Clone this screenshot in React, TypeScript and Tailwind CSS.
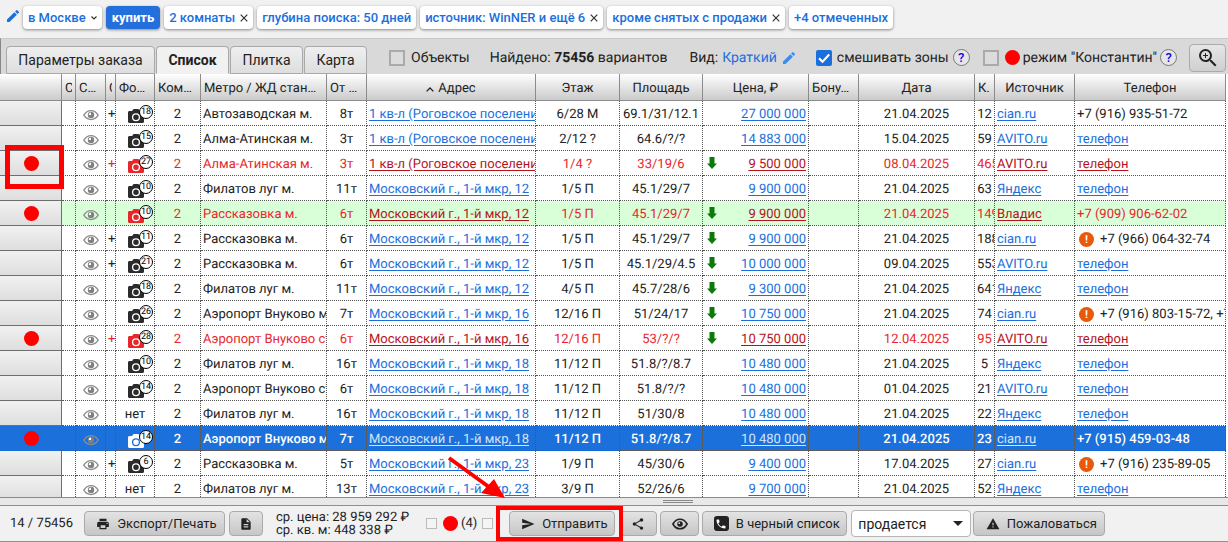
import type { ReactNode } from "react";
import clsx from "clsx";
import {
  MdDescription,
  MdEdit,
  MdPhone,
  MdPrint,
  MdSend,
  MdShare,
  MdWarning,
  MdZoomIn,
} from "react-icons/md";

type Listing = {
  plus?: boolean;
  photos?: number;
  metro: string;
  walk: string;
  address: string;
  floor: string;
  area: string;
  down?: boolean;
  price: string;
  date: string;
  count: string;
  source: string;
  phone?: string;
  warn?: boolean;
  marked?: boolean;
  tone?: "red" | "green" | "selected";
};

const ROGOVO = "1 кв-л (Роговское поселение)";
const MKR = "Московский г., 1-й мкр, ";

const listings: Listing[] = [
  { plus: true, photos: 18, metro: "Автозаводская м.", walk: "8т", address: ROGOVO, floor: "6/28 М", area: "69.1/31/12.1", price: "27 000 000", date: "21.04.2025", count: "12", source: "cian.ru", phone: "+7 (916) 935-51-72" },
  { photos: 15, metro: "Алма-Атинская м.", walk: "3т", address: ROGOVO, floor: "2/12 ?", area: "64.6/?/?", price: "14 883 000", date: "15.04.2025", count: "59", source: "AVITO.ru" },
  { plus: true, photos: 27, metro: "Алма-Атинская м.", walk: "3т", address: ROGOVO, floor: "1/4 ?", area: "33/19/6", down: true, price: "9 500 000", date: "08.04.2025", count: "465", source: "AVITO.ru", marked: true, tone: "red" },
  { photos: 10, metro: "Филатов луг м.", walk: "11т", address: MKR + "12", floor: "1/5 П", area: "45.1/29/7", price: "9 900 000", date: "21.04.2025", count: "63", source: "Яндекс" },
  { photos: 10, metro: "Рассказовка м.", walk: "6т", address: MKR + "12", floor: "1/5 П", area: "45.1/29/7", down: true, price: "9 900 000", date: "21.04.2025", count: "149", source: "Владис", phone: "+7 (909) 906-62-02", marked: true, tone: "green" },
  { plus: true, photos: 11, metro: "Рассказовка м.", walk: "6т", address: MKR + "12", floor: "1/5 П", area: "45.1/29/7", down: true, price: "9 900 000", date: "21.04.2025", count: "188", source: "cian.ru", phone: "+7 (966) 064-32-74", warn: true },
  { plus: true, photos: 21, metro: "Рассказовка м.", walk: "6т", address: MKR + "12", floor: "1/5 П", area: "45.1/29/4.5", down: true, price: "10 000 000", date: "09.04.2025", count: "553", source: "AVITO.ru" },
  { photos: 18, metro: "Филатов луг м.", walk: "11т", address: MKR + "12", floor: "4/5 П", area: "45.7/28/6", down: true, price: "9 300 000", date: "21.04.2025", count: "641", source: "Яндекс" },
  { photos: 26, metro: "Аэропорт Внуково м.", walk: "7т", address: MKR + "16", floor: "12/16 П", area: "51/24/17", down: true, price: "10 750 000", date: "21.04.2025", count: "74", source: "cian.ru", phone: "+7 (916) 803-15-72, +7 (916) 803-15-73", warn: true },
  { plus: true, photos: 28, metro: "Аэропорт Внуково ст.", walk: "6т", address: MKR + "16", floor: "12/16 П", area: "53/?/?", down: true, price: "10 750 000", date: "12.04.2025", count: "95", source: "AVITO.ru", marked: true, tone: "red" },
  { photos: 10, metro: "Филатов луг м.", walk: "16т", address: MKR + "18", floor: "11/12 П", area: "51.8/?/8.7", price: "10 480 000", date: "21.04.2025", count: "5", source: "Яндекс" },
  { photos: 14, metro: "Аэропорт Внуково ст.", walk: "6т", address: MKR + "18", floor: "11/12 П", area: "51.8/?/?", price: "10 480 000", date: "01.04.2025", count: "21", source: "AVITO.ru" },
  { metro: "Филатов луг м.", walk: "16т", address: MKR + "18", floor: "11/12 П", area: "51/30/8", price: "10 480 000", date: "21.04.2025", count: "22", source: "Яндекс" },
  { photos: 14, metro: "Аэропорт Внуково м.", walk: "7т", address: MKR + "18", floor: "11/12 П", area: "51.8/?/8.7", price: "10 480 000", date: "21.04.2025", count: "23", source: "cian.ru", phone: "+7 (915) 459-03-48", marked: true, tone: "selected" },
  { plus: true, photos: 6, metro: "Рассказовка м.", walk: "5т", address: MKR + "23", floor: "1/9 П", area: "45/30/6", price: "9 400 000", date: "17.04.2025", count: "27", source: "cian.ru", phone: "+7 (916) 235-89-05", warn: true },
  { metro: "Филатов луг м.", walk: "13т", address: MKR + "23", floor: "3/9 П", area: "52/26/6", price: "9 700 000", date: "21.04.2025", count: "52", source: "Яндекс" },
];

const columns: { title: string; width: string; left?: boolean; sorted?: boolean }[] = [
  { title: "", width: "w-[62px]" },
  { title: "С", width: "w-[14px]", left: true },
  { title: "С…", width: "w-[30px]", left: true },
  { title: "С", width: "w-[10px]", left: true },
  { title: "Фо…", width: "w-[39px]", left: true },
  { title: "Ком…", width: "w-[46px]", left: true },
  { title: "Метро / ЖД стан…", width: "w-[126px]", left: true },
  { title: "От …", width: "w-[40px]", left: true },
  { title: "Адрес", width: "w-[169px]", sorted: true },
  { title: "Этаж", width: "w-[84px]" },
  { title: "Площадь", width: "w-[83px]" },
  { title: "Цена, ₽", width: "w-[106px]" },
  { title: "Бону…", width: "w-[50px]", left: true },
  { title: "Дата", width: "w-[116px]" },
  { title: "К.", width: "w-[20px]", left: true },
  { title: "Источник", width: "w-[80px]" },
  { title: "Телефон", width: "" },
];

function EyeIcon() {
  return (
    <svg viewBox="0 0 16 12" className="inline-block h-3 w-4" aria-hidden="true">
      <path d="M.8 6.2C2.6 3.2 5 1.6 8 1.6s5.4 1.6 7.2 4.6C13.4 9 11 10.5 8 10.5S2.6 9 .8 6.2Z" fill="none" stroke="#8c8c8c" strokeWidth="1.3" />
      <circle cx="8" cy="5.9" r="3.2" fill="#808080" />
      <path d="M8 5.9V3.6A2.3 2.3 0 0 0 5.7 5.9Z" fill="#fff" />
    </svg>
  );
}

function Camera({ count, color, lens }: { count: number; color: string; lens: string }) {
  return (
    <span className={clsx("relative inline-block h-6 w-6 align-top", color)}>
      <svg viewBox="0 0 16 14" className="absolute top-2 left-0 h-3.5 w-4" aria-hidden="true">
        <path d="M1.5 2h2.7L5 .6C5.2.2 5.5 0 6 0h4c.5 0 .8.2 1 .6l.8 1.4h2.7c.9 0 1.5.6 1.5 1.5v9c0 .9-.6 1.5-1.5 1.5h-13C.6 14 0 13.4 0 12.5v-9C0 2.6.6 2 1.5 2Z" fill="currentColor" />
        <circle cx="8" cy="8.3" r="3.4" fill="none" stroke={lens} strokeWidth="1.3" />
      </svg>
      <span className="absolute top-1 left-[11px] flex size-[14px] items-center justify-center rounded-full border border-black bg-white text-[9px] leading-none font-normal text-black">
        {count}
      </span>
    </span>
  );
}

function RedDot() {
  return <span className="inline-block size-[15px] shrink-0 rounded-full bg-[#fe0000]" />;
}

function Chip({ children, close }: { children: ReactNode; close?: boolean }) {
  return (
    <button type="button" className="flex h-[23px] items-center gap-[5px] rounded bg-white px-[5px] text-[13px] font-medium whitespace-nowrap text-[#1b6fdd] shadow-[0_1px_3px_rgba(0,0,0,0.45)]">
      {children}
      {close && (
        <svg viewBox="0 0 8 8" className="size-2" aria-hidden="true">
          <path d="M.7.7l6.6 6.6M7.3.7L.7 7.3" stroke="#333" strokeWidth="1.2" />
        </svg>
      )}
    </button>
  );
}

function Tab({ children, active, width }: { children: ReactNode; active?: boolean; width: string }) {
  return (
    <button
      type="button"
      role="tab"
      aria-selected={active ?? false}
      className={clsx(
        "h-[28px] shrink-0 rounded-t border border-[#a9a9a9] text-sm whitespace-nowrap",
        width,
        active ? "border-b-[#f1f1f1] bg-[#f1f1f1] font-bold" : "bg-linear-to-b from-[#efefef] to-[#dedede]",
      )}
    >
      {children}
    </button>
  );
}

function Help() {
  return (
    <button type="button" className="flex size-[17px] shrink-0 items-center justify-center rounded-full border border-[#777] bg-[#e6e6e6] text-[13px] leading-none font-medium text-[#1507e8]">
      ?
    </button>
  );
}

function ToolButton({ children, width, label }: { children: ReactNode; width: string; label?: string }) {
  return (
    <button
      type="button"
      aria-label={label}
      className={clsx(
        "flex h-[25px] shrink-0 items-center justify-center gap-[7px] rounded border border-[#aaa] bg-linear-to-b from-[#e3e3e3] to-[#c6c6c6] whitespace-nowrap",
        width,
        !label && "pl-1",
      )}
    >
      {children}
    </button>
  );
}

function Cell({ children, className }: { children?: ReactNode; className?: string }) {
  return (
    <td className={clsx("h-[25px] border-r border-b border-dotted border-[#555] p-0", className)}>
      <div className="h-6 overflow-hidden px-0.5 leading-[28px] whitespace-nowrap">{children}</div>
    </td>
  );
}

function ListingRow({ item }: { item: Listing }) {
  const selected = item.tone === "selected";
  const red = item.tone === "red" || item.tone === "green";
  const link = clsx("underline underline-offset-2", selected ? "font-normal text-[#d5e5fa]" : red ? "text-[#b5121b]" : "text-[#1a6fdc]");

  return (
    <tr
      className={clsx(
        selected && "bg-[#1b70db] font-medium text-white",
        red && "text-[#e8262a]",
        item.tone === "green" && "bg-[#d9ffd9]",
      )}
    >
      <td
        className={clsx(
          "h-[25px] border-r border-b p-0",
          selected ? "border-[#1b70db]" : "border-[#6e6e6e] bg-linear-to-b from-[#f1f1f1] to-[#dedede]",
        )}
      >
        <div className="flex h-6 items-center justify-center pl-0.5">{item.marked && <RedDot />}</div>
      </td>
      <Cell />
      <Cell className="text-center"><EyeIcon /></Cell>
      <Cell className="text-center">{item.plus && "+"}</Cell>
      <Cell className={item.photos ? "text-right" : "text-center"}>
        {item.photos ? (
          <Camera
            count={item.photos}
            color={selected ? "text-white" : red ? "text-[#e8262a]" : "text-[#2b2b2b]"}
            lens={selected ? "#1b70db" : "#fff"}
          />
        ) : (
          "нет"
        )}
      </Cell>
      <Cell className="text-center">2</Cell>
      <Cell>{item.metro}</Cell>
      <Cell className="text-center">{item.walk}</Cell>
      <Cell><a href="#" className={link}>{item.address}</a></Cell>
      <Cell className="text-center">{item.floor}</Cell>
      <Cell className="text-center">{item.area}</Cell>
      <Cell>
        <div className="flex items-start justify-between pl-0.5">
          {item.down ? (
            <svg viewBox="0 0 10 12" className="mt-1.5 h-3 w-2.5" aria-label="Цена снижена">
              <path d="M2.5 0h5v6.5H10L5 12 0 6.5h2.500Z" fill="#0b7a0b" />
            </svg>
          ) : (
            <span />
          )}
          <a href="#" className={link}>{item.price}</a>
        </div>
      </Cell>
      <Cell />
      <Cell className="text-center">{item.date}</Cell>
      <Cell className="text-center">{item.count}</Cell>
      <Cell><a href="#" className={link}>{item.source}</a></Cell>
      <Cell>
        {item.warn && (
          <span className="mr-1.5 ml-0.5 inline-flex size-[15px] items-center justify-center rounded-full bg-[#e8590c] text-[11px] leading-none font-bold text-white">
            !
          </span>
        )}
        {item.phone ?? <a href="#" className={link}>телефон</a>}
      </Cell>
    </tr>
  );
}

export default function App() {
  return (
    <div className="relative flex h-screen flex-col overflow-hidden bg-[#f1f1f1] font-[Roboto,sans-serif] text-[13px] text-[#222] [text-rendering:geometricPrecision]">
      <div className="flex h-[38px] shrink-0 items-start gap-1 pt-1.5 pl-[5px]">
        <MdEdit className="mt-0.5 mr-[-2px] size-4 text-[#1b6fdd]" />
        <Chip>
          в Москве
          <svg viewBox="0 0 6 4" className="h-1 w-1.5" aria-hidden="true">
            <path d="M.5.5L3 3 5.5.5" fill="none" stroke="#333" strokeWidth="1.2" />
          </svg>
        </Chip>
        <button type="button" className="h-[23px] rounded bg-[#236fdc] px-1.5 text-[13px] font-bold text-white shadow-[0_1px_3px_rgba(0,0,0,0.45)]">
          купить
        </button>
        <Chip close>2 комнаты</Chip>
        <Chip>глубина поиска: 50 дней</Chip>
        <Chip close>источник: WinNER и ещё 6</Chip>
        <Chip close>кроме снятых с продажи</Chip>
        <Chip>+4 отмеченных</Chip>
      </div>

      <div className="flex h-9 shrink-0 items-center border-t border-l border-t-[#c9c9c9] border-l-[#888] bg-[#d9d9d9] pt-0.5 pr-0.5 pl-[5px] text-sm whitespace-nowrap">
        <div role="tablist" className="flex gap-px self-end">
          <Tab width="w-[149px]">Параметры заказа</Tab>
          <Tab width="w-[73px]" active>Список</Tab>
          <Tab width="w-[73px]">Плитка</Tab>
          <Tab width="w-[63px]">Карта</Tab>
        </div>
        <label className="ml-[22px] flex items-center gap-1.5">
          <input type="checkbox" className="size-4 appearance-none border-2 border-[#aaa] bg-[#dcdcdc]" />
          Объекты
        </label>
        <span className="ml-5">Найдено: <b>75456</b> вариантов</span>
        <span className="ml-[22px] flex items-center gap-1">
          Вид: <a href="#" className="text-[#1b6fdd]">Краткий</a>
          <MdEdit className="size-4 text-[#3b8bf0]" />
        </span>
        <label className="ml-[19px] flex items-center gap-[5px]">
          <span className="relative flex size-4">
            <input type="checkbox" defaultChecked className="size-4 appearance-none rounded-[2px] bg-[#1b6fdd]" />
            <svg viewBox="0 0 16 16" className="pointer-events-none absolute inset-0" aria-hidden="true">
              <path d="M3 8.2l3.5 3.5L13.2 4.5" fill="none" stroke="#fff" strokeWidth="2" />
            </svg>
          </span>
          смешивать зоны
        </label>
        <span className="ml-1"><Help /></span>
        <label className="ml-[13px] flex items-center gap-[3px]">
          <input type="checkbox" className="mr-[3px] size-4 appearance-none border-2 border-[#aaa] bg-[#dcdcdc]" />
          <RedDot />
          режим "Константин"
        </label>
        <span className="ml-[3px]"><Help /></span>
        <button type="button" aria-label="Увеличить" className="ml-auto flex h-7 w-[37px] items-center justify-center rounded border border-[#aaa] bg-linear-to-b from-[#e6e6e6] to-[#cfcfcf]">
          <MdZoomIn className="size-6" />
        </button>
      </div>

      <div className="min-h-0 flex-1 overflow-hidden border-b border-[#8a8a8a] bg-white pr-0.5">
        <table className="w-full table-fixed border-separate border-spacing-0">
          <thead>
            <tr className="bg-linear-to-b from-white to-[#c9c9c9]">
              {columns.map((column, i) => (
                <th key={i} className={clsx("h-[27px] border-r border-b border-[#8c8c8c] p-0 pt-1 font-normal", column.width)}>
                  <div className={clsx("mx-[3px] flex items-center gap-1 overflow-hidden whitespace-nowrap", !column.left && "justify-center")}>
                    {column.sorted && (
                      <svg viewBox="0 0 8 5" className="h-[5px] w-2" aria-hidden="true">
                        <path d="M.6 4.4L4 1l3.400 3.400" fill="none" stroke="#222" strokeWidth="1.3" />
                      </svg>
                    )}
                    {column.title}
                  </div>
                </th>
              ))}
            </tr>
          </thead>
          <tbody>
            {listings.map((item, i) => (
              <ListingRow key={i} item={item} />
            ))}
          </tbody>
        </table>
      </div>

      <div className="flex h-[7px] shrink-0 items-center justify-center bg-[#e8e8e8]">
        <span className="ml-32 h-[3px] w-[30px] border-y border-[#888]" />
      </div>

      <footer className="flex h-[37px] shrink-0 items-center border-y border-[#8f8f8f] pl-2.5 whitespace-nowrap">
        <span className="w-[74px]">14 / 75456</span>
        <ToolButton width="w-[141px]">
          <MdPrint className="size-3.5" />
          Экспорт/Печать
        </ToolButton>
        <span className="ml-1">
          <ToolButton width="w-[34px]" label="Документ"><MdDescription className="size-3.5" /></ToolButton>
        </span>
        <p className="ml-[13px] w-[150px] leading-[13px]">
          ср. цена: 28 959 292 ₽<br />ср. кв. м: 448 338 ₽
        </p>
        <input type="checkbox" aria-label="Все" className="mr-1.5 size-[11px] appearance-none border border-[#bbb] bg-[#f4f4f4]" />
        <RedDot />
        <span className="mx-[3px]">(4)</span>
        <input type="checkbox" aria-label="Отмеченные" className="ml-0.5 size-[11px] appearance-none border border-[#bbb] bg-[#f4f4f4]" />
        <div className="relative ml-4">
          <ToolButton width="w-[106px]">
            <MdSend className="size-3.5" />
            Отправить
          </ToolButton>
          <div className="pointer-events-none absolute -top-[5px] -left-[13px] z-10 h-[35px] w-[127px] border-4 border-[#fe0000]" />
          <svg viewBox="0 0 60 46" className="pointer-events-none absolute -top-14 -left-[62px] h-[46px] w-[60px]" aria-hidden="true">
            <path d="M2 3L42 32" stroke="#fe0000" strokeWidth="4" />
            <path d="M58 43L34 38 47 24Z" fill="#fe0000" />
          </svg>
        </div>
        <div className="ml-1 flex items-center gap-[3px]">
          <ToolButton width="w-[38px]" label="Поделиться"><MdShare className="size-3.5" /></ToolButton>
          <ToolButton width="w-[39px]" label="Просмотр">
            <svg viewBox="0 0 16 12" className="h-3 w-4" aria-hidden="true">
              <path d="M.9 6C2.7 2.8 5 1.2 8 1.2S13.3 2.8 15.1 6C13.3 9.2 11 10.8 8 10.8S2.7 9.2.9 6Z" fill="none" stroke="#222" strokeWidth="1.6" />
              <circle cx="8" cy="6" r="2.8" fill="#222" />
              <circle cx="7.2" cy="5.2" r=".9" fill="#ddd" />
            </svg>
          </ToolButton>
          <ToolButton width="w-[145px]">
            <span className="flex size-[15px] items-center justify-center rounded-[3px] bg-[#222] text-white">
              <MdPhone className="size-3" />
            </span>
            В черный список
          </ToolButton>
        </div>
        <div className="relative ml-1">
          <select aria-label="Статус" className="h-[27px] w-[120px] appearance-none rounded border border-[#b5b5b5] bg-white pl-1.5 text-sm">
            <option>продается</option>
          </select>
          <svg viewBox="0 0 10 5" className="pointer-events-none absolute top-[11px] right-2 h-[5px] w-2.5" aria-hidden="true">
            <path d="M0 0h10L5 5Z" fill="#222" />
          </svg>
        </div>
        <span className="ml-0.5">
          <ToolButton width="w-[132px]">
            <MdWarning className="size-3.5" />
            Пожаловаться
          </ToolButton>
        </span>
      </footer>

      <div className="pointer-events-none absolute top-[145px] left-[5px] h-11 w-[59px] border-[5px] border-[#fe0000]" />
    </div>
  );
}
